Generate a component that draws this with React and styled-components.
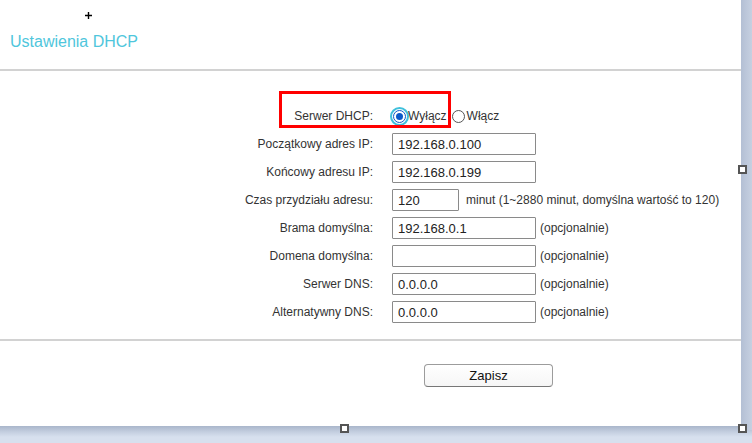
import React, { useState } from "react";
import styled, { createGlobalStyle } from "styled-components";

const Global = createGlobalStyle`
  html, body { margin: 0; padding: 0; }
  body {
    background: #d7e0ee;
    font-family: Arial, "Liberation Sans", sans-serif;
    overflow: hidden;
  }
`;

const Page = styled.div`
  position: relative;
  width: 752px;
  height: 443px;
  background:
    linear-gradient(to right, #b3bfd4, #c6d0e1) 741px 0 / 11px 430px no-repeat,
    linear-gradient(to bottom, #a9b6cb 426px, #c4cfe0 432px, #d7e0ee 437px);
`;

const Panel = styled.div`
  position: relative;
  width: 741px;
  height: 426px;
  background: #fff;
  display: flex;
  flex-direction: column;
`;

const Header = styled.div`
  height: 71px;
  border-bottom: 2px solid #d2d2d2;
  box-sizing: border-box;
  padding: 32px 0 0 10px;
`;

const Title = styled.h1`
  margin: 0;
  font-size: 16px;
  font-weight: normal;
  color: #4fc6dc;
  line-height: 20px;
`;

const Form = styled.div`
  display: grid;
  grid-template-columns: 373px auto;
  column-gap: 19px;
  grid-auto-rows: 28px;
  padding: 31px 0 13px;
  border-bottom: 2px solid #d2d2d2;
`;

const Label = styled.div`
  font-size: 12px;
  color: #333;
  text-align: right;
  line-height: 28px;
  white-space: nowrap;
`;

const Field = styled.div`
  display: flex;
  align-items: center;
  gap: ${(p) => p.gap || 4}px;
  font-size: 12px;
  color: #333;
`;

const Input = styled.input`
  box-sizing: border-box;
  width: ${(p) => p.w || 144}px;
  height: 22px;
  margin: 0;
  padding: 0 5px;
  border: 1px solid #8a8a8a;
  border-radius: 1px;
  font-family: Arial, "Liberation Sans", sans-serif;
  font-size: 13px;
  color: #222;
  outline: none;
`;

const Hint = styled.span`
  font-size: 12px;
  color: #333;
  white-space: nowrap;
`;

const RadioGroup = styled.div`
  display: flex;
  align-items: center;
  font-size: 12px;
  color: #333;
`;

const RadioOption = styled.label`
  display: flex;
  align-items: center;
  cursor: pointer;
  margin-right: 5px;
`;

const RadioDot = styled.span`
  box-sizing: border-box;
  width: 13px;
  height: 13px;
  border-radius: 50%;
  border: 1px solid ${(p) => (p.checked ? "#0c5ac8" : "#555")};
  background: #fff;
  margin: 0 2px 0 ${(p) => (p.first ? 1 : 0)}px;
  display: flex;
  align-items: center;
  justify-content: center;
  outline: ${(p) => (p.focused ? "2px solid #3fc0dc" : "none")};
  outline-offset: 1px;
  &::after {
    content: "";
    width: 7px;
    height: 7px;
    border-radius: 50%;
    background: ${(p) => (p.checked ? "#0c5ac8" : "transparent")};
  }
`;

const Highlight = styled.div`
  position: absolute;
  left: 279px;
  top: 91px;
  width: 172px;
  height: 37px;
  border: 3px solid #f00;
  box-sizing: border-box;
  pointer-events: none;
`;

const Footer = styled.div`
  display: flex;
  padding: 23px 0 0 424px;
`;

const Button = styled.button`
  width: 129px;
  height: 23px;
  border: 1px solid #9c9c9c;
  border-bottom-color: #777;
  border-radius: 4px;
  background: linear-gradient(#ffffff, #f6f6f6);
  font-family: Arial, "Liberation Sans", sans-serif;
  font-size: 13px;
  color: #111;
  padding: 0;
`;

const Handle = styled.span`
  position: absolute;
  left: ${(p) => p.x - 4}px;
  top: ${(p) => p.y - 4}px;
  width: 5px;
  height: 5px;
  border: 2px solid #555;
  background: #fff;
`;

const Cursor = styled.svg`
  position: absolute;
  left: 85px;
  top: 12px;
`;

const rows = [
  { label: "Początkowy adres IP:", value: "192.168.0.100" },
  { label: "Końcowy adresu IP:", value: "192.168.0.199" },
  { label: "Czas przydziału adresu:", value: "120", w: 67, hint: "minut (1~2880 minut, domyślna wartość to 120)", gap: 7 },
  { label: "Brama domyślna:", value: "192.168.0.1", hint: "(opcjonalnie)" },
  { label: "Domena domyślna:", value: "", hint: "(opcjonalnie)" },
  { label: "Serwer DNS:", value: "0.0.0.0", hint: "(opcjonalnie)" },
  { label: "Alternatywny DNS:", value: "0.0.0.0", hint: "(opcjonalnie)" },
];

export default function App() {
  const [dhcp, setDhcp] = useState("off");

  return (
    <Page>
      <Global />
      <Panel>
        <Header>
          <Title>Ustawienia DHCP</Title>
        </Header>
        <Form>
          <Label>Serwer DHCP:</Label>
          <RadioGroup>
            <RadioOption onClick={() => setDhcp("off")}>
              <RadioDot first checked={dhcp === "off"} focused={dhcp === "off"} />
              Wyłącz
            </RadioOption>
            <RadioOption onClick={() => setDhcp("on")}>
              <RadioDot checked={dhcp === "on"} focused={dhcp === "on"} />
              Włącz
            </RadioOption>
          </RadioGroup>
          {rows.map((r) => (
            <React.Fragment key={r.label}>
              <Label>{r.label}</Label>
              <Field gap={r.gap}>
                <Input w={r.w} defaultValue={r.value} />
                {r.hint && <Hint>{r.hint}</Hint>}
              </Field>
            </React.Fragment>
          ))}
        </Form>
        <Footer>
          <Button>Zapisz</Button>
        </Footer>
        <Highlight />
        <Cursor width="7" height="7" viewBox="0 0 7 7">
          <path d="M3.5 0v7M0 3.5h7" stroke="#000" strokeWidth="1.4" />
        </Cursor>
      </Panel>
      <Handle x={742} y={169} />
      <Handle x={344} y={428} />
      <Handle x={742} y={428} />
    </Page>
  );
}
